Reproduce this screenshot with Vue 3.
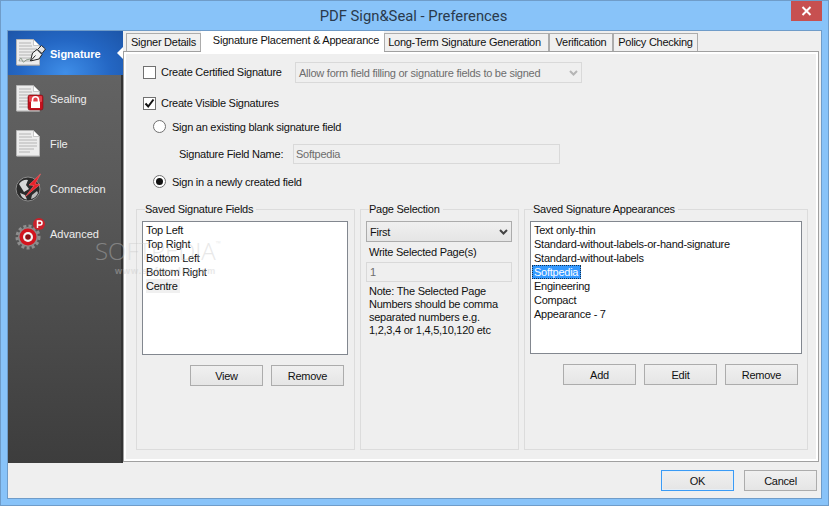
<template>
  <div class="window">
    <div class="titlebar">
      <span class="title">PDF Sign&amp;Seal - Preferences</span>
      <div class="close">
        <svg width="11" height="10" viewBox="0 0 11 10"><path d="M1.5 1 L9.5 9 M9.5 1 L1.5 9" stroke="#fff" stroke-width="2" /></svg>
      </div>
    </div>

    <div class="client">
      <div class="main">
        <div class="sidebar">
          <div v-for="item in navItems" :key="item.id" class="nav-item" :class="{ active: item.id === 'signature' }">
            <svg class="nav-icon" width="36" height="36" viewBox="0 0 36 36">
              <g v-if="item.doc">
                <path d="M3 5 H20 L26 11 V31 H3 Z" fill="#8f8f8f" opacity="0.6" />
                <path d="M2.5 4.5 H19.5 L25.5 10.5 V30 H2.5 Z" fill="#ececec" stroke="#b5b5b5" />
                <path d="M19.5 4.5 V10.5 H25.5 Z" fill="#fff" stroke="#a8a8a8" stroke-width="0.6" />
                <path d="M5 8 H17 M5 11 H18 M5 14 H23 M5 17 H23 M5 20 H23 M5 23 H20 M5 26 H16" stroke="#b4b4b4" stroke-width="1" />
              </g>
              <g v-if="item.id === 'signature'">
                <path d="M5 26 Q7 21 8 25 T12 25 L16 24" stroke="#8a9a8a" stroke-width="1" fill="none" />
                <path d="M16.5 26 L18.5 18 L23 14.5 L28 19.5 L25 24 Z" fill="#f2f2f2" stroke="#222" stroke-width="1" />
                <path d="M16.5 26 L21.5 20.5" stroke="#222" stroke-width="1" />
                <path d="M23.5 14.5 L27.5 10.5 L31.5 14 L28 18.5 Z" fill="#e4e4e4" stroke="#2a2a2a" stroke-width="1" />
              </g>
              <g v-if="item.id === 'sealing'">
                <rect x="14" y="14" width="15" height="15" rx="2" fill="#c4111d" stroke="#7a1016" stroke-width="0.6" />
                <rect x="15" y="15" width="13" height="6" rx="1" fill="#e2404a" />
                <path d="M18.5 21 V18.8 a3 3 0 0 1 6 0 V21" fill="none" stroke="#fff" stroke-width="1.6" />
                <rect x="17" y="20.5" width="9" height="6.5" fill="#fff" />
              </g>
              <g v-if="item.id === 'connection'">
                <circle cx="14" cy="18" r="12" fill="#2b2b2b" stroke="#8a8a8a" stroke-width="1" />
                <path d="M5 13 Q9 8 14 9 L12 14 L15 18 L10 21 Z" fill="#d8d8d8" />
                <path d="M6 22 L11 24 L13 28.5 Q8 28 6 22 Z" fill="#cfcfcf" />
                <path d="M18 24 L23 20 L24 22 Q22 27 17 28 Z" fill="#bdbdbd" />
                <path d="M26.5 3 L15 14 L20 14.5 L11.5 25.5 L26 13.5 L21 13 Z" fill="#e8202a" stroke="#ff6a6a" stroke-width="0.6" />
              </g>
              <g v-if="item.id === 'advanced'">
                <circle cx="14" cy="21" r="11" fill="none" stroke="#8e8e8e" stroke-width="3" stroke-dasharray="3 2.2" />
                <circle cx="14" cy="21" r="10" fill="#8c8c8c" />
                <circle cx="14" cy="21" r="8.5" fill="#d3141e" />
                <circle cx="14" cy="21" r="5" fill="#f4f4f4" />
                <circle cx="14" cy="21" r="2.8" fill="#8a1016" />
                <circle cx="25" cy="8" r="6" fill="#c8202a" />
                <path d="M23.5 12 V5 H26 a2 2 0 0 1 0 4 H23.5" fill="none" stroke="#fff" stroke-width="1.5" />
              </g>
            </svg>
            <span class="nav-label">{{ item.label }}</span>
            <span v-if="item.id === 'signature'" class="nav-pointer"></span>
          </div>
        </div>

        <div class="tabs-area">
          <div class="tabs">
            <div v-for="tab in tabs" :key="tab.label" class="tab" :class="[tab.cls, { selected: tab.selected }]" :style="{ width: tab.width + 'px' }">
              {{ tab.label }}
            </div>
          </div>

          <div class="panel">
            <div class="row row-certified">
              <span class="checkbox"></span>
              <span class="cert-label">Create Certified Signature</span>
              <div class="combo disabled cert-combo">
                <span>Allow form field filling or signature fields to be signed</span>
                <svg width="9" height="6" viewBox="0 0 9 6"><path d="M1 1 L4.5 4.5 L8 1" fill="none" stroke="#b5b5b5" stroke-width="2" /></svg>
              </div>
            </div>

            <div class="row row-visible">
              <span class="checkbox">
                <svg width="11" height="11" viewBox="0 0 11 11"><path d="M1.5 5.5 L4.2 8.5 L9.5 1.5" fill="none" stroke="#111" stroke-width="2" /></svg>
              </span>
              <span class="visible-label">Create Visible Signatures</span>
            </div>

            <div class="row row-radio">
              <span class="radio"></span>
              <span>Sign an existing blank signature field</span>
            </div>

            <div class="row row-field">
              <span class="field-label">Signature Field Name:</span>
              <div class="input disabled field-input">Softpedia</div>
            </div>

            <div class="row row-radio second">
              <span class="radio on"></span>
              <span>Sign in a newly created field</span>
            </div>

            <div class="groups">
              <div class="group group-fields">
                <div class="legend">Saved Signature Fields</div>
                <ul class="list list-fields">
                  <li v-for="f in fields" :key="f"><span :class="{ hover: f === 'Centre' }">{{ f }}</span></li>
                </ul>
                <div class="buttons">
                  <button class="btn">View</button>
                  <button class="btn">Remove</button>
                </div>
              </div>

              <div class="group group-page">
                <div class="legend">Page Selection</div>
                <div class="combo page-combo">
                  <span>First</span>
                  <svg width="9" height="6" viewBox="0 0 9 6"><path d="M1 1 L4.5 4.5 L8 1" fill="none" stroke="#444" stroke-width="2" /></svg>
                </div>
                <div class="page-label">Write Selected Page(s)</div>
                <div class="input disabled page-input">1</div>
                <div class="note">
                  Note: The Selected Page<br />
                  Numbers should be comma<br />
                  separated numbers e.g.<br />
                  1,2,3,4 or 1,4,5,10,120 etc
                </div>
              </div>

              <div class="group group-appearances">
                <div class="legend">Saved Signature Appearances</div>
                <ul class="list list-appearances">
                  <li v-for="a in appearances" :key="a"><span :class="{ picked: a === 'Softpedia' }">{{ a }}</span></li>
                </ul>
                <div class="buttons">
                  <button class="btn">Add</button>
                  <button class="btn">Edit</button>
                  <button class="btn">Remove</button>
                </div>
              </div>
            </div>
          </div>
        </div>
      </div>

      <div class="footer">
        <button class="btn default">OK</button>
        <button class="btn">Cancel</button>
      </div>
    </div>

    <div class="watermark">SOFTPEDIA<sup>™</sup></div>
    <div class="watermark-url">www.softpedia.com</div>
  </div>
</template>

<script setup>
const navItems = [
  { id: 'signature', label: 'Signature', doc: true },
  { id: 'sealing', label: 'Sealing', doc: true },
  { id: 'file', label: 'File', doc: true },
  { id: 'connection', label: 'Connection' },
  { id: 'advanced', label: 'Advanced' },
]

const tabs = [
  { label: 'Signer Details', width: 75 },
  { label: 'Signature Placement & Appearance', width: 183, selected: true },
  { label: 'Long-Term Signature Generation', width: 165, cls: 'long' },
  { label: 'Verification', width: 64 },
  { label: 'Policy Checking', width: 85 },
]

const fields = ['Top Left', 'Top Right', 'Bottom Left', 'Bottom Right', 'Centre']

const appearances = [
  'Text only-thin',
  'Standard-without-labels-or-hand-signature',
  'Standard-without-labels',
  'Softpedia',
  'Engineering',
  'Compact',
  'Appearance - 7',
]
</script>

<style>
html, body { margin: 0; overflow: hidden; }
</style>

<style scoped>
* { box-sizing: border-box; }
.window {
  position: relative;
  width: 829px;
  height: 506px;
  background: #88c3f9;
  border: 1px solid #6f9cc9;
  padding: 0 6px 6px;
  font-family: "Liberation Sans", Arial, sans-serif;
  font-size: 11px;
  color: #111;
  overflow: hidden;
}
.titlebar {
  position: relative;
  height: 29px;
  display: flex;
  align-items: center;
  justify-content: center;
}
.title { font-family: Roboto, sans-serif; font-size: 14.8px; color: #2a3a4c; margin: 1px 2px 0 0; }
.close {
  position: absolute;
  right: 0;
  top: 0;
  width: 31px;
  height: 20px;
  background: #c75050;
  display: flex;
  align-items: center;
  justify-content: center;
}
.client {
  height: 469px;
  border: 1px solid #6f9cc9;
  background: #efefef;
}
.main { display: flex; height: 432px; }

.sidebar {
  width: 115px;
  background: linear-gradient(#666 0%, #5a5a5a 35%, #3d3d3d 100%);
  border-right: 2px solid #333;
}
.nav-item {
  position: relative;
  height: 45px;
  display: flex;
  align-items: center;
  padding-left: 6px;
  color: #eee;
}
.nav-item.active {
  height: 44px;
  margin-bottom: 1px;
  margin-right: -2px;
  background: radial-gradient(ellipse at 50% 95%, #3f8ee8 0%, #2467c4 55%, #1c55a8 100%);
  color: #fff;
  font-weight: 700;
}
.nav-item.active .nav-label { margin-top: 2px; }
.nav-icon { flex: none; }
.nav-pointer {
  position: absolute;
  right: 0;
  top: 16px;
  border: 6px solid transparent;
  border-right-color: #fff;
  border-left-width: 0;
}

.tabs-area, .footer { letter-spacing: -0.25px; }
.tabs-area { width: 696px; display: flex; flex-direction: column; }
.tabs { height: 20px; display: flex; align-items: flex-end; padding-left: 3px; position: relative; z-index: 1; }
.tab {
  height: 18px;
  background: #f0f0f0;
  border: 1px solid #acacac;
  border-bottom: 0;
  text-align: center;
  line-height: 17px;
  white-space: nowrap;
}
.tab.long { padding-right: 4px; }
.tab.selected {
  height: 22px;
  margin-bottom: -2px;
  padding-left: 7px;
  background: #fff;
  border: 0;
  line-height: 19px;
}

.panel {
  height: 411px;
  border: 1px solid #a0a0a0;
  outline: 2px solid #fff;
  outline-offset: -3px;
  padding: 2px;
  background: #efefef;
}
.row { display: flex; align-items: center; }
.row-certified { margin-top: 8px; height: 21px; padding-left: 17px; }
.cert-label { margin: 0 0 2px 5px; width: 134px; white-space: nowrap; }
.row-visible { margin-top: 14px; height: 13px; padding-left: 17px; gap: 5px; }
.visible-label { margin-bottom: 2px; }
.row-radio { margin-top: 10px; height: 13px; padding-left: 27px; gap: 6px; }
.row-radio.second { margin-top: 11px; }
.row-field { margin-top: 11px; height: 20px; padding-left: 53px; }
.field-label { width: 114px; white-space: nowrap; }

.checkbox {
  width: 13px;
  height: 13px;
  background: #fff;
  border: 1px solid #707070;
  display: flex;
  align-items: center;
  justify-content: center;
  flex: none;
}
.radio {
  width: 13px;
  height: 13px;
  border-radius: 50%;
  background: #fff;
  border: 1px solid #707070;
  flex: none;
  position: relative;
}
.radio.on::after {
  content: "";
  position: absolute;
  left: 2px;
  top: 2px;
  width: 7px;
  height: 7px;
  border-radius: 50%;
  background: #111;
}

.combo {
  display: flex;
  align-items: center;
  justify-content: space-between;
  border: 1px solid #acacac;
  background: linear-gradient(#f0f0f0, #e5e5e5);
  padding: 0 3px;
}
.combo.disabled {
  border-color: #d9d9d9;
  background: #efefef;
  color: #6d6d6d;
}
.cert-combo { width: 287px; height: 21px; }
.input { border: 1px solid #d9d9d9; background: #efefef; padding-left: 2px; }
.input.disabled { color: #6d6d6d; }
.field-input { width: 267px; height: 20px; line-height: 18px; }

.groups { display: flex; gap: 5px; margin-top: 21px; padding-left: 10px; }
.group {
  height: 241px;
  border: 1px solid #dcdcdc;
  padding: 0 5px;
}
.group-fields { width: 219px; }
.group-fields .buttons { padding-right: 5px; }
.group-page { width: 159px; }
.group-appearances { width: 284px; }
.legend {
  margin: -8px 0 4px 3px;
  padding: 0 3px 0 0;
  width: fit-content;
  height: 15px;
  line-height: 15px;
  background: #efefef;
}
.list {
  list-style: none;
  margin: 0;
  padding: 1px 3px;
  background: #fff;
  border: 1px solid #82878f;
}
.list li { height: 14px; line-height: 14px; white-space: nowrap; }
.list-fields { width: 206px; height: 134px; }
.list-appearances { width: 272px; height: 133px; }
.hover { display: inline-block; background: #f0f0f0; padding-right: 2px; }
.picked {
  display: inline-block;
  background: #3399ff;
  color: #fff;
  outline: 1px dotted #16324f;
  outline-offset: -1px;
  padding: 0 3px 0 2px;
  margin-left: -2px;
}
.buttons {
  display: flex;
  justify-content: flex-end;
  gap: 8px;
  padding-right: 4px;
  margin-top: 10px;
}
.btn {
  width: 73px;
  height: 21px;
  padding: 0;
  border: 1px solid #acacac;
  background: linear-gradient(#f0f0f0, #e5e5e5);
  font: inherit;
  letter-spacing: inherit;
  color: #111;
}
.btn.default { border-color: #3a9bf5; box-shadow: inset 0 0 0 1px #e6eef6; }

.page-combo { width: 146px; height: 21px; }
.page-label { margin: 3px 0 0 3px; height: 14px; line-height: 14px; white-space: nowrap; }
.page-input { width: 146px; height: 20px; margin-top: 3px; padding-left: 3px; line-height: 18px; }
.note { margin: 3px 0 0 3px; line-height: 13px; white-space: nowrap; }

.footer {
  height: 35px;
  display: flex;
  justify-content: flex-end;
  gap: 10px;
  padding: 7px 4px 0 0;
}

.watermark {
  position: absolute;
  left: 94px;
  top: 233px;
  font-family: "Open Sans", sans-serif;
  font-size: 24px;
  font-weight: 300;
  color: #c8c8c8;
  opacity: 0.4;
  pointer-events: none;
}
.watermark sup { font-size: 7px; vertical-align: 14px; }
.watermark-url {
  position: absolute;
  left: 114px;
  top: 265px;
  font-size: 9px;
  font-weight: 700;
  letter-spacing: 1px;
  color: #c8c8c8;
  opacity: 0.4;
  pointer-events: none;
}
</style>
